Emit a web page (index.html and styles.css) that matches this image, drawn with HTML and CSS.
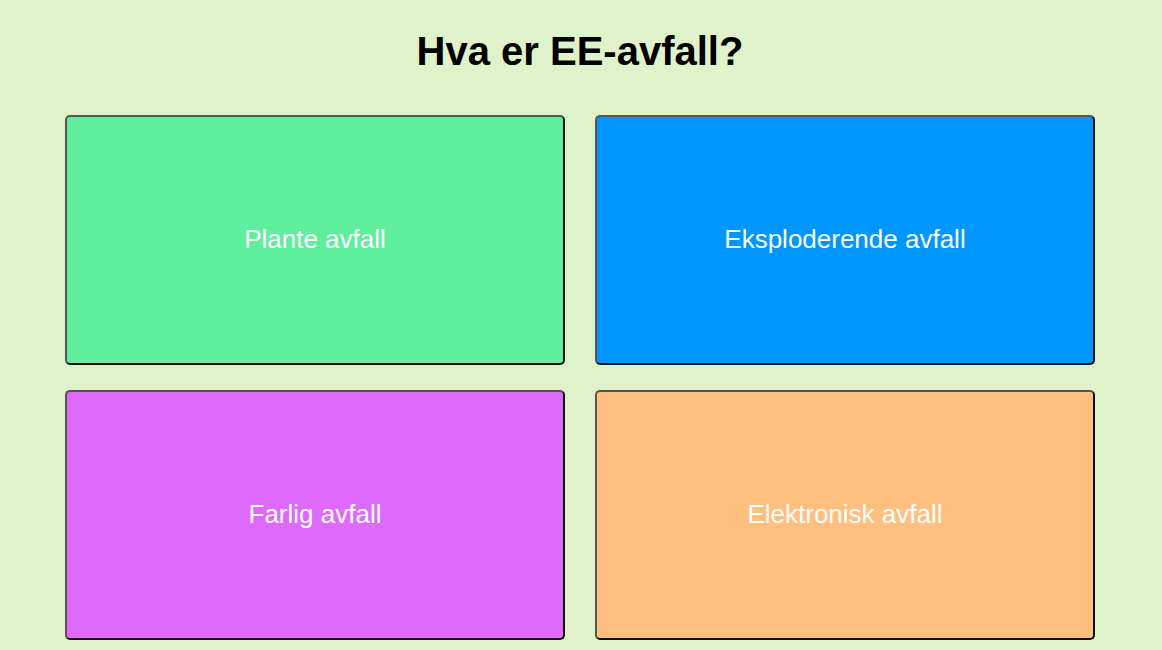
FILE: index.html
```html
<!DOCTYPE html>
<html lang="no">
<head>
<meta charset="utf-8">
<title>Hva er EE-avfall?</title>
<link rel="stylesheet" href="styles.css">
</head>
<body>
<main class="quiz">
  <h1 class="question">Hva er EE-avfall?</h1>
  <div class="answers">
    <button class="answer green">Plante avfall</button>
    <button class="answer blue">Eksploderende avfall</button>
    <button class="answer purple">Farlig avfall</button>
    <button class="answer orange">Elektronisk avfall</button>
  </div>
</main>
</body>
</html>
```
FILE: styles.css
```css
html, body {
  margin: 0;
  padding: 0;
  background: #dff2c9;
  font-family: "Liberation Sans", Arial, sans-serif;
}
.quiz {
  display: flex;
  flex-direction: column;
  align-items: center;
  padding-top: 28px;
  padding-right: 2px;
}
.question {
  margin: 0 0 41px;
  font-size: 40px;
  font-weight: bold;
  color: #000;
  line-height: 46px;
}
.answers {
  display: grid;
  grid-template-columns: 500px 500px;
  grid-auto-rows: 250px;
  column-gap: 30px;
  row-gap: 25px;
}
.answer {
  box-sizing: border-box;
  border-style: solid;
  border-width: 2px;
  border-color: #555 #111 #111 #555;
  border-radius: 5px;
  color: #fff;
  font-family: "Liberation Sans", Arial, sans-serif;
  font-size: 26px;
  padding: 0 0 2px;
  cursor: pointer;
}
.green { background: #5fef9c; }
.blue { background: #0096ff; }
.purple { background: #df69fd; }
.orange { background: #ffbf7f; }
```
